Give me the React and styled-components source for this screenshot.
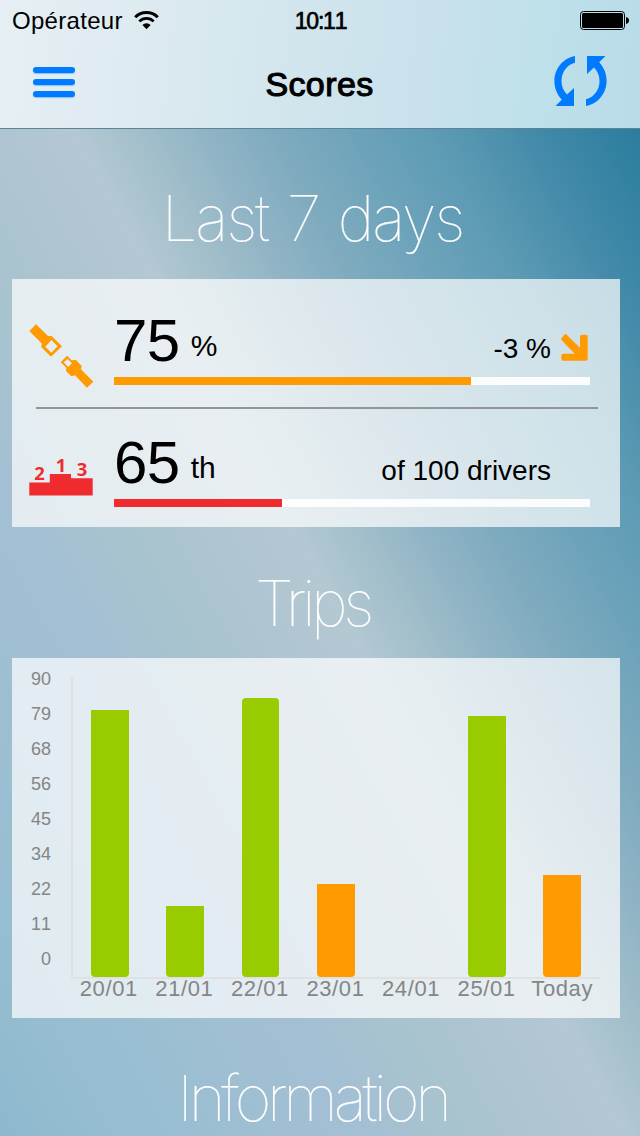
import styled, { createGlobalStyle } from "styled-components";

const ORANGE = "#ff9a00";
const RED = "#ef2b2d";
const GREEN = "#99cc00";

const GlobalStyle = createGlobalStyle`
  * {
    box-sizing: border-box;
  }

  body {
    margin: 0;
    font-family: "Liberation Sans", Arial, sans-serif;
    color: #000;
  }
`;

const Screen = styled.div`
  width: 640px;
  height: 1136px;
  overflow: hidden;
  background: linear-gradient(
    61.2deg,
    #8cb8ce 0%,
    #94bccf 6%,
    #99bed1 13.2%,
    #a2bfd3 26.1%,
    #a3bfd3 29.2%,
    #a7c3cf 35%,
    #a9c4ce 38.5%,
    #aec4d1 42%,
    #b3c8d2 49.6%,
    #a4c0cb 54%,
    #92b5c6 59.3%,
    #80abbf 64.9%,
    #6ca3ba 72%,
    #5c9ab4 78.4%,
    #3f88a7 87%,
    #2b7d9e 94.4%,
    #257a9b 100%
  );
`;

const Header = styled.header`
  height: 129px;
  border-bottom: 1px solid #5d8496;
  background: linear-gradient(
    96deg,
    #e6eff4 0%,
    #dceaf0 25%,
    #d1e5ed 48%,
    #c8e1ec 68%,
    #bfe1ea 82%,
    #b9dbe9 100%
  );
`;

const StatusBar = styled.div`
  display: grid;
  grid-template-columns: 1fr auto 1fr;
  height: 40px;
  padding: 0 11px 0 12px;
  font-size: 24px;
  line-height: 42px;
`;

const Carrier = styled.div`
  display: flex;
  align-items: flex-start;
  gap: 11px;
  letter-spacing: 0.3px;
`;

const WifiIcon = styled.svg`
  margin-top: 11px;
`;

const Clock = styled.div`
  font-size: 23px;
  font-kerning: none;
  letter-spacing: -1.2px;
  -webkit-text-stroke: 0.7px #000;
`;

const BatteryIcon = styled.svg`
  justify-self: end;
  margin-top: 11px;
`;

const NavBar = styled.div`
  display: grid;
  grid-template-columns: 1fr auto 1fr;
  height: 88px;
  padding: 0 33px;
`;

const NavTitle = styled.h1`
  margin: 0;
  padding-right: 1px;
  font-size: 34px;
  font-weight: 400;
  line-height: 88px;
  letter-spacing: 0.4px;
  -webkit-text-stroke: 1.1px #000;
`;

const MenuButton = styled.button`
  display: flex;
  flex-direction: column;
  gap: 6px;
  width: 42px;
  margin-top: 27px;
  padding: 0;
  border: none;
  background: none;
`;

const MenuLine = styled.span`
  width: 42px;
  height: 6px;
  border-radius: 3px;
  background: #007aff;
  box-shadow: 0 1px 1px rgba(0, 122, 255, 0.4);
`;

const RefreshButton = styled.button`
  justify-self: end;
  align-self: start;
  height: 52px;
  margin-top: 15px;
  padding: 0;
  border: none;
  background: none;
`;

const Content = styled.main`
  padding: 0 20px 0 12px;
`;

const SectionTitle = styled.h2`
  height: ${({ $height }) => $height}px;
  margin: 0;
  padding: ${({ $top }) => $top}px 7px 0 0;
  color: #fff;
  font-family: Inter, "Liberation Sans", sans-serif;
  font-size: 63px;
  font-weight: 100;
  line-height: 76px;
  letter-spacing: ${({ $spacing }) => $spacing}px;
  word-spacing: 3px;
  text-align: center;
  white-space: nowrap;
  -webkit-text-stroke: 0.2px #fff;
`;

const Card = styled.section`
  background: rgba(255, 255, 255, 0.7);
`;

const ScoreCard = styled(Card)`
  height: 248px;
  padding-top: 8px;
`;

const Divider = styled.hr`
  height: 2px;
  margin: 0 22px 0 24px;
  border: none;
  background: #929699;
`;

const ScoreRow = styled.div`
  display: flex;
  height: 120px;
  padding: 0 30px 0 17px;
`;

const ScoreIcon = styled.div`
  width: 85px;
  padding-top: 37px;
`;

const ScoreBody = styled.div`
  flex: 1;
`;

const ScoreLine = styled.div`
  display: flex;
  align-items: flex-end;
  height: 90px;
`;

const Value = styled.span`
  padding-bottom: 6px;
  font-size: 60px;
  line-height: 60px;
  letter-spacing: -0.5px;
`;

const Unit = styled.span`
  margin-left: 11px;
  padding-bottom: 16px;
  font-size: 30px;
  line-height: 30px;
`;

const Detail = styled.span`
  margin-left: auto;
  padding-bottom: 14px;
  font-size: 28px;
  line-height: 28px;
`;

const Trend = styled.span`
  display: flex;
  width: 39px;
  padding: 0 0 16px 10px;
`;

const Track = styled.div`
  height: 8px;
  background: rgba(255, 255, 255, 0.9);
`;

const Fill = styled.div`
  height: 8px;
  background: ${({ $color }) => $color};
`;

const ChartCard = styled(Card)`
  display: flex;
  height: 360px;
  padding: 4px 20px 0 0;
  color: #858585;
`;

const YAxis = styled.div`
  display: flex;
  flex-direction: column;
  width: 60px;
  padding-right: 21px;
  font-size: 18px;
  font-kerning: none;
  line-height: 35px;
  text-align: right;
`;

const Plot = styled.div`
  flex: 1;
  padding-top: 15px;
`;

const Bars = styled.div`
  display: grid;
  grid-template-columns: repeat(7, 1fr);
  align-items: end;
  justify-items: center;
  height: 302px;
  border-bottom: 2px solid #e0e1e2;
  box-shadow: -1px 0 #e0e1e2, inset 1px 0 #e0e1e2;
`;

const Bar = styled.div`
  width: 37.7px;
  border-radius: ${({ $round }) => ($round ? "4px" : "0 0 4px 4px")};
  background: ${({ $color }) => $color};
`;

const XAxis = styled.div`
  display: grid;
  grid-template-columns: repeat(7, 1fr);
  margin-left: -1px;
  font-size: 22px;
  line-height: 20px;
  letter-spacing: 0.6px;
  text-align: center;
  white-space: nowrap;
`;

const scale = [90, 79, 68, 56, 45, 34, 22, 11, 0];

const trips = [
  { day: "20/01", height: 267, color: GREEN },
  { day: "21/01", height: 71, color: GREEN },
  { day: "22/01", height: 279, color: GREEN, round: true },
  { day: "23/01", height: 93, color: ORANGE },
  { day: "24/01", height: 0, color: GREEN },
  { day: "25/01", height: 261, color: GREEN },
  { day: "Today", height: 102, color: ORANGE },
];

function Wifi() {
  return (
    <WifiIcon width="25" height="19" viewBox="0 0 25 19" fill="none" stroke="#000">
      <path d="M1.2 6.2a16 16 0 0 1 22.6 0" strokeWidth="3" />
      <path d="M5.3 10.4a10.2 10.2 0 0 1 14.4 0" strokeWidth="2.7" />
      <path d="M12.5 18.3 8.4 14a5.8 5.8 0 0 1 8.2 0z" fill="#000" stroke="none" />
    </WifiIcon>
  );
}

function Battery() {
  return (
    <BatteryIcon width="49" height="19" viewBox="0 0 49 19">
      <rect x="0.5" y="0.5" width="44" height="18" rx="3" fill="none" stroke="#000" />
      <rect x="2" y="2" width="41" height="15" rx="1.5" />
      <path d="M46 6c2 .4 3 1.8 3 3.5s-1 3.1-3 3.5z" />
    </BatteryIcon>
  );
}

function Refresh() {
  const arrow =
    "M21 1C9 3 .4 14 .4 26c0 8 3.2 14 7.4 18.7L1.5 51H20V33l-7 6.5C9.3 36 7.5 31 7.5 26c0-9 5.7-16.5 13.5-18.3z";

  return (
    <svg width="53" height="52" viewBox="0 0 53 52" fill="#007aff">
      <path d={arrow} />
      <path d={arrow} transform="rotate(180 26.5 26)" />
    </svg>
  );
}

function Belt() {
  return (
    <svg width="66" height="66" viewBox="87 162 198 198" fill={ORANGE} fillRule="evenodd">
      <path d="M108 163 88 183l38 38-3 9 30 30 33-31-32-32-9 2zM154 210l19 19-19 19-18-18z" />
      <path d="M201 257l14 14 13-1 17 18-2 10 37 37-19 18-36-37-11 3-16-16 1-10-17-16zM203 267l-12 10 13 14 12-11z" />
    </svg>
  );
}

function Podium() {
  return (
    <svg
      width="64"
      height="50"
      viewBox="0 -10 64 50"
      fill={RED}
      fontFamily="'Noto Sans', sans-serif"
      fontSize="18.5"
      fontWeight="700"
      textAnchor="middle"
    >
      <path d="M.3 26.5h20.5V18H42v4.3h21.7v17.3H.3z" />
      <text x="10.5" y="24">2</text>
      <text x="32" y="16">1</text>
      <text x="53" y="20">3</text>
    </svg>
  );
}

function TrendArrow() {
  return (
    <svg width="27" height="27" viewBox="724 190 81 81" fill={ORANGE}>
      <path d="M741 192 781 231v-33q0-6 6-6h12q5 0 5 5v67q0 6-6 6h-67q-6 0-6-6v-9q0-6 6-6h34l-39-40q-3-4 0-7l8-10q4-4 8 0z" />
    </svg>
  );
}

function Score({ icon, value, unit, detail, trend, percent, color }) {
  return (
    <ScoreRow>
      <ScoreIcon>{icon}</ScoreIcon>
      <ScoreBody>
        <ScoreLine>
          <Value>{value}</Value>
          <Unit>{unit}</Unit>
          <Detail>{detail}</Detail>
          <Trend>{trend}</Trend>
        </ScoreLine>
        <Track>
          <Fill $color={color} style={{ width: `${percent}%` }} />
        </Track>
      </ScoreBody>
    </ScoreRow>
  );
}

function App() {
  return (
    <Screen>
      <GlobalStyle />
      <Header>
        <StatusBar>
          <Carrier>
            Opérateur
            <Wifi />
          </Carrier>
          <Clock>10:11</Clock>
          <Battery />
        </StatusBar>
        <NavBar>
          <MenuButton aria-label="Menu">
            <MenuLine />
            <MenuLine />
            <MenuLine />
          </MenuButton>
          <NavTitle>Scores</NavTitle>
          <RefreshButton aria-label="Refresh">
            <Refresh />
          </RefreshButton>
        </NavBar>
      </Header>

      <Content>
        <SectionTitle $height={150} $top={51} $spacing={-2.1}>
          Last 7 days
        </SectionTitle>
        <ScoreCard>
          <Score
            icon={<Belt />}
            value="75"
            unit="%"
            detail="-3 %"
            trend={<TrendArrow />}
            percent={75}
            color={ORANGE}
          />
          <Divider />
          <Score
            icon={<Podium />}
            value="65"
            unit="th"
            detail="of 100 drivers"
            percent={35.3}
            color={RED}
          />
        </ScoreCard>

        <SectionTitle $height={131} $top={38} $spacing={-4.4}>
          Trips
        </SectionTitle>
        <ChartCard>
          <YAxis>
            {scale.map((n) => (
              <span key={n}>{n}</span>
            ))}
          </YAxis>
          <Plot>
            <Bars>
              {trips.map((trip) => (
                <Bar
                  key={trip.day}
                  $color={trip.color}
                  $round={trip.round}
                  style={{ height: trip.height }}
                />
              ))}
            </Bars>
            <XAxis>
              {trips.map((trip) => (
                <span key={trip.day}>{trip.day}</span>
              ))}
            </XAxis>
          </Plot>
        </ChartCard>

        <SectionTitle $height={118} $top={42} $spacing={-4.2}>
          Information
        </SectionTitle>
      </Content>
    </Screen>
  );
}

export default App;
